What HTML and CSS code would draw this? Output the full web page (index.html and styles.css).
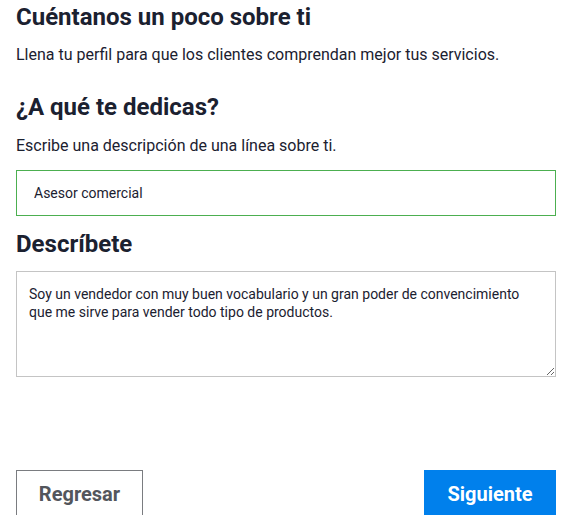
FILE: index.html
```html
<!DOCTYPE html>
<html lang="es">

<head>
    <meta charset="UTF-8">
    <meta name="viewport" content="width=device-width, initial-scale=1.0">
    <title>Perfil - Cuéntanos sobre ti</title>
    <link rel="stylesheet" href="styles.css">
</head>

<body>
    <main class="profile-form">
        <h1 class="form-title">Cuéntanos un poco sobre ti</h1>
        <p class="form-intro">Llena tu perfil para que los clientes comprendan mejor tus servicios.</p>

        <h2 class="section-title section-title--first">¿A qué te dedicas?</h2>
        <p class="section-hint">Escribe una descripción de una línea sobre ti.</p>
        <input class="field-input" type="text" value="Asesor comercial">

        <h2 class="section-title">Descríbete</h2>
        <textarea class="field-textarea">Soy un vendedor con muy buen vocabulario y un gran poder de convencimiento que me sirve para vender todo tipo de productos.</textarea>

        <div class="form-actions">
            <button class="btn btn-back" type="button">Regresar</button>
            <button class="btn btn-next" type="button">Siguiente</button>
        </div>
    </main>
</body>

</html>
```

FILE: styles.css
```css
* {
    margin: 0;
    padding: 0;
    box-sizing: border-box;
}

body {
    font-family: Roboto, "Liberation Sans", sans-serif;
    color: #1b2130;
    background-color: #ffffff;
    overflow: hidden;
}

.profile-form {
    display: flex;
    flex-direction: column;
    width: 540px;
    margin-left: 16px;
    padding-top: 3px;
}

.form-title {
    font-size: 24px;
    line-height: 28px;
    font-weight: 700;
}

.form-intro {
    margin-top: 13px;
    font-size: 16px;
    line-height: 22px;
}

.section-title {
    margin-top: 14px;
    font-size: 24px;
    line-height: 28px;
    font-weight: 700;
}

.section-title--first {
    margin-top: 27px;
}

.section-hint {
    margin-top: 14px;
    font-size: 16px;
    line-height: 22px;
}

.field-input {
    margin-top: 13px;
    width: 100%;
    height: 46px;
    padding: 0 17px;
    border: 1px solid #4caf50;
    font-family: inherit;
    font-size: 14px;
    color: #1b2130;
    outline: none;
}

.field-textarea {
    margin-top: 13px;
    width: 100%;
    height: 106px;
    padding: 13px 12px 12px;
    border: 1px solid #c4c4c4;
    font-family: inherit;
    font-size: 14px;
    line-height: 18px;
    color: #1b2130;
    resize: vertical;
    outline: none;
}

.form-actions {
    display: flex;
    justify-content: space-between;
    margin-top: 93px;
}

.btn {
    height: 48px;
    font-family: inherit;
    font-size: 20px;
    font-weight: 700;
    cursor: pointer;
}

.btn-back {
    width: 127px;
    background-color: #ffffff;
    color: #53565c;
    border: 1px solid #7a7c80;
}

.btn-next {
    width: 132px;
    background-color: #0080ec;
    color: #ffffff;
    border: none;
}
```
